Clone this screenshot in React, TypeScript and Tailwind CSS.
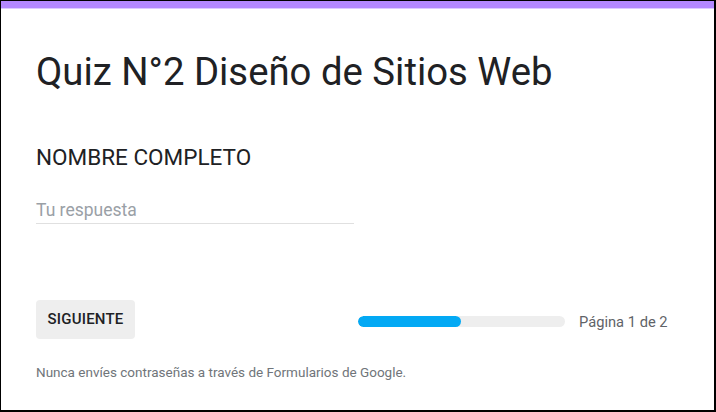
import React from "react";

export default function App() {
  return (
    <div className="w-[716px] h-[412px] bg-white border-l border-t border-r-2 border-b-2 border-black flex flex-col overflow-hidden" style={{ fontFamily: "Roboto, 'Liberation Sans', sans-serif" }}>
      <div className="h-[7px] bg-[#b388ff] shrink-0" />
      <div className="h-[1px] bg-[#dccbff] shrink-0" />
      <div className="flex flex-col pl-[35px] pr-[20px]">
        <h1 className="mt-[41px] text-[38.3px] leading-[44px] text-[#202124] font-normal whitespace-nowrap">Quiz N°2 Diseño de Sitios Web</h1>
        <div className="mt-[49px] text-[22.5px] leading-[28px] text-[#202124] whitespace-nowrap">NOMBRE COMPLETO</div>
        <div className="mt-[27px] w-[318px] border-b border-[#e0e0e0] pb-[1px]">
          <div className="text-[17.5px] leading-[24px] text-[#9aa0a6]">Tu respuesta</div>
        </div>
        <div className="mt-[76px] flex items-center">
          <button className="w-[99px] h-[39px] shrink-0 rounded-[4px] bg-[#eeeeee] text-[15px] font-medium text-[#202124] tracking-[0.2px]">SIGUIENTE</button>
          <div className="ml-[223px] mt-[4px] w-[207px] h-[11px] shrink-0 rounded-full bg-[#eeeeee] overflow-hidden">
            <div className="h-full w-[103px] rounded-full bg-[#03a9f4]" />
          </div>
          <div className="ml-[14px] mt-[4px] text-[14.7px] leading-[20px] text-[#5f6368] whitespace-nowrap">Página 1 de 2</div>
        </div>
        <div className="mt-[25px] text-[13.5px] leading-[16px] text-[#70757a] whitespace-nowrap">Nunca envíes contraseñas a través de Formularios de Google.</div>
      </div>
    </div>
  );
}
